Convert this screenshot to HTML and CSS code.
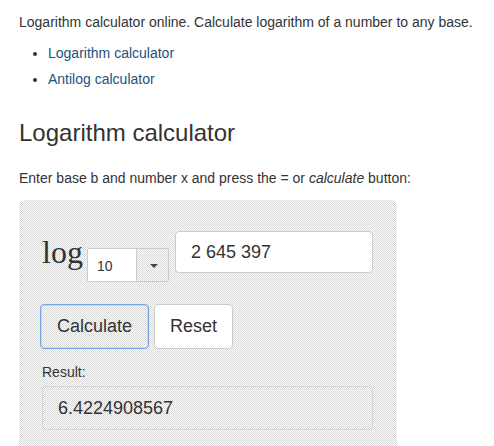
FILE: index.html
```html
<!DOCTYPE html>
<html lang="en">
<head>
    <meta charset="UTF-8">
    <title>Logarithm calculator</title>
    <link rel="stylesheet" href="styles.css">
</head>
<body>
    <div class="container">
        <p class="intro">Logarithm calculator online. Calculate logarithm of a number to any base.</p>

        <ul class="links">
            <li><a href="#log">Logarithm calculator</a></li>
            <li><a href="#antilog">Antilog calculator</a></li>
        </ul>

        <h1>Logarithm calculator</h1>
        <p class="hint">Enter base b and number x and press the = or <em>calculate</em> button:</p>

        <form class="calc" onsubmit="return false">
            <div class="calc-row">
                <span class="log-label">log</span>
                <div class="base-select">
                    <span class="base-value">10</span>
                    <span class="base-arrow"></span>
                </div>
                <input class="number-input" type="text" value="2 645 397">
            </div>

            <div class="btn-row">
                <button type="button" class="btn btn-calc">Calculate</button>
                <button type="reset" class="btn btn-reset">Reset</button>
            </div>

            <label class="result-label">Result:</label>
            <div class="result-box">6.4224908567</div>
        </form>
    </div>
</body>
</html>
```

FILE: styles.css
```css
:root {
    --text: #333333;
    --link: #23527c;
    --border: #cccccc;
    --focus: #74a3ea;
    /* 1px checkerboard used behind the calculator form */
    --checker: url("data:image/svg+xml,%3Csvg xmlns='http://www.w3.org/2000/svg' width='2' height='2' shape-rendering='crispEdges'%3E%3Crect width='2' height='2' fill='%23fff'/%3E%3Crect x='1' width='1' height='1' fill='%23d6d6d6'/%3E%3Crect y='1' width='1' height='1' fill='%23d6d6d6'/%3E%3C/svg%3E") 0 0 / 2px 2px;
}

* {
    margin: 0;
    padding: 0;
    box-sizing: border-box;
}

body {
    font-family: "Liberation Sans", Arial, sans-serif;
    font-size: 14px;
    line-height: 20px;
    color: var(--text);
    background: #ffffff;
}

.container {
    padding: 12px 0 0 19px;
}

.links {
    margin-top: 8px;
    padding-left: 29px;
}

.links li {
    line-height: 26px;
}

.links a {
    color: var(--link);
    text-decoration: none;
}

h1 {
    margin-top: 28px;
    font-size: 24px;
    font-weight: 400;
    line-height: 26px;
}

.hint {
    margin-top: 22px;
}

.calc {
    margin-top: 12px;
    width: 378px;
    height: 260px;
    padding: 31px 0 0 23px;
    border-radius: 6px;
    background: #ebebeb var(--checker);
}

.calc-row {
    display: flex;
    align-items: flex-start;
}

.log-label {
    font-family: "Liberation Serif", "Times New Roman", serif;
    font-size: 32px;
    line-height: 32px;
    margin-top: 5px;
    width: 45px;
}

.base-select {
    display: flex;
    margin-top: 17px;
    height: 34px;
    border: 1px solid var(--border);
    border-radius: 2px;
}

.base-value {
    width: 48px;
    padding: 7px 0 0 9px;
    background: #ffffff;
    font-size: 14px;
}

.base-arrow {
    position: relative;
    width: 32px;
    border-left: 1px solid var(--border);
}

.base-arrow::after {
    content: "";
    position: absolute;
    left: 13px;
    top: 15px;
    border-left: 4px solid transparent;
    border-right: 4px solid transparent;
    border-top: 4px solid #444444;
}

.number-input {
    margin-left: 6px;
    width: 198px;
    height: 42px;
    padding: 0 0 0 15px;
    border: 1px solid var(--border);
    border-radius: 4px;
    background: #ffffff;
    font-family: inherit;
    font-size: 18px;
    color: var(--text);
}

.btn-row {
    display: flex;
    gap: 5px;
    margin: 22px 0 0 -2px;
}

.btn {
    height: 45px;
    border: 1px solid var(--border);
    border-radius: 4px;
    font-family: inherit;
    font-size: 18px;
    color: var(--text);
    cursor: pointer;
}

.btn-calc {
    width: 109px;
    background: transparent;
    border-color: var(--focus);
    box-shadow: inset 0 0 0 1px rgba(116, 163, 234, 0.25);
}

.btn-reset {
    width: 79px;
    background: #ffffff;
}

.result-label {
    display: block;
    margin-top: 13px;
    line-height: 20px;
}

.result-box {
    margin-top: 4px;
    width: 331px;
    height: 44px;
    padding: 11px 0 0 15px;
    border: 1px solid #d4d4d4;
    border-radius: 3px;
    font-size: 18px;
}
```
